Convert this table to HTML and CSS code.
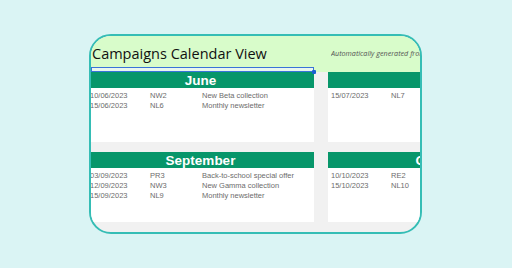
FILE: index.html
```html
<!DOCTYPE html>
<html>
<head>
<meta charset="utf-8">
<link rel="stylesheet" href="styles.css">
</head>
<body>
<div class="card">
  <div class="head">
    <div class="title">Campaigns Calendar View</div>
    <div class="note">Automatically generated from campaign data</div>
  </div>
  <div class="selrow">
    <div class="selbox"><span class="handle"></span></div>
  </div>
  <div class="sheet">
    <div class="panel">
      <div class="band">June</div>
      <div class="row"><span>10/06/2023</span><span>NW2</span><span>New Beta collection</span></div>
      <div class="row"><span>15/06/2023</span><span>NL6</span><span>Monthly newsletter</span></div>
    </div>
    <div class="panel">
      <div class="band">July</div>
      <div class="row"><span>15/07/2023</span><span>NL7</span><span>Monthly newsletter</span></div>
    </div>
    <div class="panel">
      <div class="band">September</div>
      <div class="row"><span>03/09/2023</span><span>PR3</span><span>Back-to-school special offer</span></div>
      <div class="row"><span>12/09/2023</span><span>NW3</span><span>New Gamma collection</span></div>
      <div class="row"><span>15/09/2023</span><span>NL9</span><span>Monthly newsletter</span></div>
    </div>
    <div class="panel">
      <div class="band">October</div>
      <div class="row"><span>10/10/2023</span><span>RE2</span><span>Reengagement</span></div>
      <div class="row"><span>15/10/2023</span><span>NL10</span><span>Monthly newsletter</span></div>
    </div>
  </div>
</div>
</body>
</html>
```

FILE: styles.css
```css
html, body {
  margin: 0;
  padding: 0;
  background: #daf4f4;
  width: 512px;
  height: 268px;
  overflow: hidden;
}

.card {
  margin: 34px 0 0 89px;
  width: 333px;
  height: 200px;
  box-sizing: border-box;
  border: 2px solid #35bdb5;
  border-radius: 22px;
  overflow: hidden;
  background: #f1f1f1;
  display: flex;
  flex-direction: column;
}

.head {
  height: 31px;
  box-sizing: border-box;
  padding-top: 3px;
  flex: none;
  background: #d8fcca;
  display: grid;
  grid-template-columns: 240px 1fr;
  align-items: center;
  overflow: hidden;
}

.title {
  font-family: "Open Sans", "DejaVu Sans", sans-serif;
  font-size: 14.5px;
  font-weight: 500;
  color: #111;
  white-space: nowrap;
  margin-left: 1px;
}

.note {
  font-family: "Open Sans", "DejaVu Sans", sans-serif;
  font-style: italic;
  font-size: 7.2px;
  color: #555;
  white-space: nowrap;
  overflow: hidden;
}

.selrow {
  height: 5px;
  flex: none;
  background: #d8fcca;
}

.selbox {
  position: relative;
  width: 223px;
  height: 5px;
  box-sizing: border-box;
  border: 1px solid #3a73d8;
  background: #e9f7ee;
}

.handle {
  position: absolute;
  right: -3px;
  bottom: -3px;
  width: 4px;
  height: 4px;
  background: #1c5fd2;
  border-radius: 1px;
}

.sheet {
  margin-left: -4px;
  display: grid;
  grid-template-columns: 227px 227px;
  grid-template-rows: 70px 70px;
  column-gap: 14px;
  row-gap: 10px;
}

.panel {
  background: #fff;
  overflow: hidden;
}

.band {
  height: 16px;
  line-height: 17px;
  background: #07966a;
  color: #fff;
  font-family: "Liberation Sans", Arial, sans-serif;
  font-weight: bold;
  font-size: 13.5px;
  text-align: center;
  margin-bottom: 2px;
}

.row {
  display: grid;
  grid-template-columns: 60px 52px 1fr;
  padding-left: 3px;
  height: 10px;
  line-height: 11px;
  font-family: "Liberation Sans", Arial, sans-serif;
  font-size: 7.5px;
  color: #6c6c6c;
  white-space: nowrap;
}
```
